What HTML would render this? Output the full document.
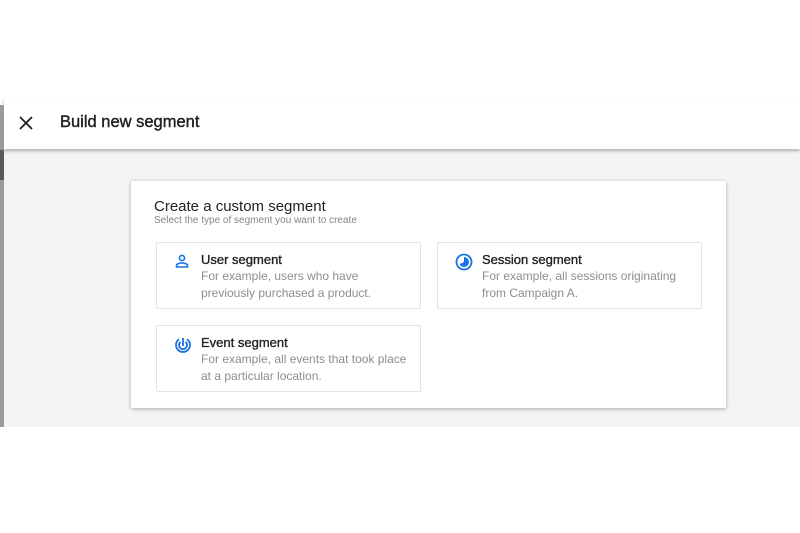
<!DOCTYPE html><html><head><style>
body{margin:0;width:800px;height:533px;background:#fff;position:relative;overflow:hidden;font-family:"Liberation Sans",sans-serif}
.strip{position:absolute;left:0;top:105px;width:4px;height:322px;background:#9a9a9a}
.strip2{position:absolute;left:0;top:150px;width:4px;height:30px;background:#5a5a5a}
.gray{position:absolute;left:4px;top:150px;width:796px;height:277px;background:#f4f4f4}
.hdr{position:absolute;left:4px;top:97px;width:796px;height:52px;background:#fff;box-shadow:0 2px 3px rgba(0,0,0,.3)}
.hdr .t{position:absolute;left:56px;top:16px;font-size:16.5px;color:#202124;-webkit-text-stroke:0.4px #202124}
.card{position:absolute;left:131px;top:181px;width:595px;height:227px;background:#fff;box-shadow:0 1px 4px rgba(0,0,0,.3)}
.h1{position:absolute;left:23px;top:17px;font-size:15px;color:#202124}
.h2{position:absolute;left:23px;top:34px;font-size:10px;color:#80868b}
.tile{position:absolute;box-sizing:border-box;width:265px;height:67px;border:1px solid #e3e3e3;border-radius:2px}
.tile b{position:absolute;left:44px;top:9px;font-size:13px;font-weight:normal;color:#202124;-webkit-text-stroke:0.35px #202124}
.tile p{position:absolute;left:44px;top:25px;margin:0;font-size:12px;line-height:16.5px;color:#8a8e92;white-space:nowrap}
.tile svg{position:absolute;left:17px;top:10px}
</style></head><body>
<div class="gray"></div>
<div class="hdr"><svg style="position:absolute;left:15px;top:19px" width="14" height="14" viewBox="0 0 14 14"><path d="M1 1L13 13M13 1L1 13" stroke="#202124" stroke-width="1.8"/></svg><div class="t">Build new segment</div></div>
<div class="strip"></div><div class="strip2"></div>
<div class="card">
<div class="h1">Create a custom segment</div>
<div class="h2">Select the type of segment you want to create</div>
<div class="tile" style="left:25px;top:61px"><svg width="16" height="16" viewBox="0 0 16 16"><circle cx="8" cy="5" r="2.6" fill="none" stroke="#1a73e8" stroke-width="1.6"/><path d="M2.5 14v-1.5c0-1.5 3-2.6 5.5-2.6s5.5 1.1 5.5 2.6V14z" fill="none" stroke="#1a73e8" stroke-width="1.6"/></svg><b>User segment</b><p>For example, users who have<br>previously purchased a product.</p></div>
<div class="tile" style="left:306px;top:61px"><svg width="18" height="18" viewBox="0 0 18 18"><circle cx="9" cy="9" r="7.5" fill="none" stroke="#1a73e8" stroke-width="1.8"/><path d="M9 4A5 5 0 1 1 4.5 11.2L9 9z" fill="#1a73e8"/></svg><b>Session segment</b><p>For example, all sessions originating<br>from Campaign A.</p></div>
<div class="tile" style="left:25px;top:144px"><svg width="18" height="18" viewBox="0 0 18 18"><path d="M5 3.2A7 7 0 1 0 13 3.2" fill="none" stroke="#1a73e8" stroke-width="1.8"/><path d="M6.5 6A4 4 0 1 0 11.5 6" fill="none" stroke="#1a73e8" stroke-width="1.8"/><path d="M9 2v8" stroke="#1a73e8" stroke-width="1.8"/></svg><b>Event segment</b><p>For example, all events that took place<br>at a particular location.</p></div>
</div>
</body></html>
